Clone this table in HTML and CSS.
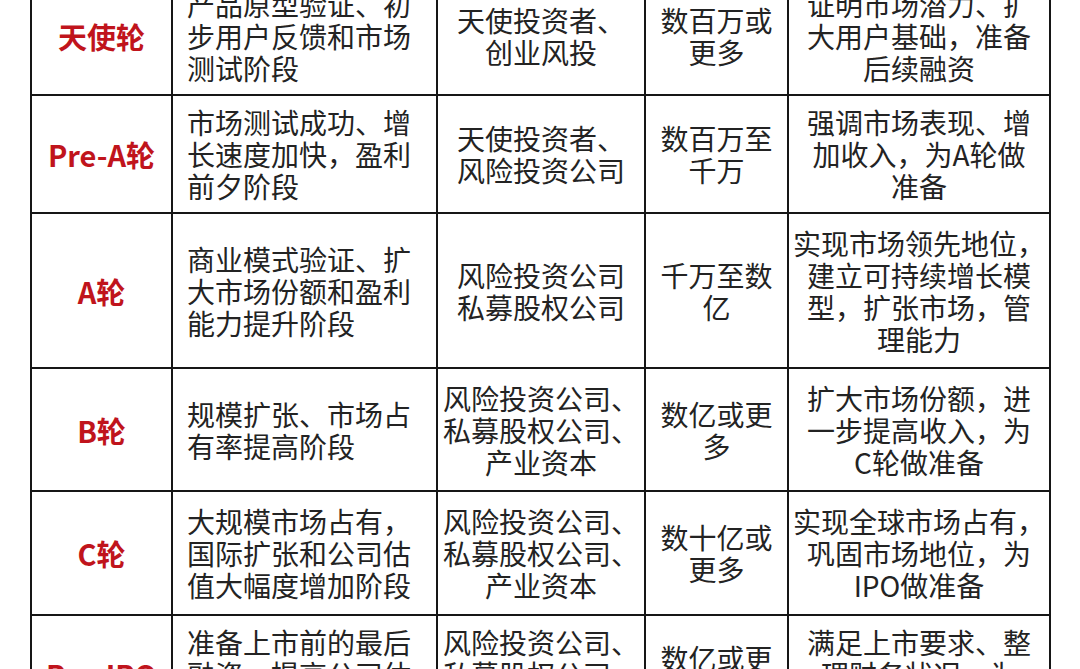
FILE: index.html
```html
<!DOCTYPE html>
<html lang="zh-CN">
<head>
<meta charset="utf-8">
<title>融资轮次</title>
<link rel="stylesheet" href="styles.css">
</head>
<body>
<div class="frame">
<table class="rounds">
<colgroup>
<col class="c1"><col class="c2"><col class="c3"><col class="c4"><col class="c5">
</colgroup>
<tbody>
<tr class="r0">
<td class="name">天使轮</td>
<td class="desc">产品原型验证、初<br>步用户反馈和市场<br>测试阶段</td>
<td class="mid">天使投资者、<br>创业风投</td>
<td class="mid">数百万或<br>更多</td>
<td class="mid">证明市场潜力、扩<br>大用户基础，准备<br>后续融资</td>
</tr>
<tr class="r1">
<td class="name">Pre-A轮</td>
<td class="desc">市场测试成功、增<br>长速度加快，盈利<br>前夕阶段</td>
<td class="mid">天使投资者、<br>风险投资公司</td>
<td class="mid">数百万至<br>千万</td>
<td class="mid">强调市场表现、增<br>加收入，为A轮做<br>准备</td>
</tr>
<tr class="r2">
<td class="name">A轮</td>
<td class="desc">商业模式验证、扩<br>大市场份额和盈利<br>能力提升阶段</td>
<td class="mid">风险投资公司<br>私募股权公司</td>
<td class="mid">千万至数<br>亿</td>
<td class="mid">实现市场领先地位，<br>建立可持续增长模<br>型，扩张市场，管<br>理能力</td>
</tr>
<tr class="r3">
<td class="name">B轮</td>
<td class="desc">规模扩张、市场占<br>有率提高阶段</td>
<td class="mid">风险投资公司、<br>私募股权公司、<br>产业资本</td>
<td class="mid">数亿或更<br>多</td>
<td class="mid">扩大市场份额，进<br>一步提高收入，为<br>C轮做准备</td>
</tr>
<tr class="r4">
<td class="name">C轮</td>
<td class="desc">大规模市场占有，<br>国际扩张和公司估<br>值大幅度增加阶段</td>
<td class="mid">风险投资公司、<br>私募股权公司、<br>产业资本</td>
<td class="mid">数十亿或<br>更多</td>
<td class="mid">实现全球市场占有，<br>巩固市场地位，为<br>IPO做准备</td>
</tr>
<tr class="r5">
<td class="name">Pre-IPO</td>
<td class="desc">准备上市前的最后<br>融资，提高公司估<br>值阶段</td>
<td class="mid">风险投资公司、<br>私募股权公司、<br>产业资本</td>
<td class="mid">数亿或更<br>多</td>
<td class="mid">满足上市要求、整<br>理财务状况，为<br>IPO做准备</td>
</tr>
</tbody>
</table>
</div>
</body>
</html>
```

FILE: styles.css
```css
html, body {
  margin: 0;
  padding: 0;
  background: #ffffff;
}

.frame {
  width: 1080px;
  height: 669px;
  overflow: hidden;
  background: #ffffff;
}

.rounds {
  margin: -24px 0 0 30px;
  width: 1021px;
  table-layout: fixed;
  border-collapse: collapse;
  font-family: "Noto Sans CJK SC", "Noto Sans", sans-serif;
  font-size: 28px;
  line-height: 32px;
  color: #232323;
}

.c1 { width: 141px; }
.c2 { width: 265px; }
.c3 { width: 208px; }
.c4 { width: 143px; }
.c5 { width: 262px; }

.rounds td {
  border: 2px solid #161616;
  padding: 0;
  vertical-align: middle;
  white-space: nowrap;
  overflow: hidden;
}

.r0 { height: 118px; }
.r1 { height: 118px; }
.r2 { height: 155px; }
.r3 { height: 123px; }
.r4 { height: 124px; }
.r5 { height: 118px; }

.name {
  text-align: center;
  color: #c0141c;
  font-weight: 700;
  font-size: 29px;
}

.desc {
  text-align: left;
  padding-left: 14px !important;
}

.mid {
  text-align: center;
}
```
